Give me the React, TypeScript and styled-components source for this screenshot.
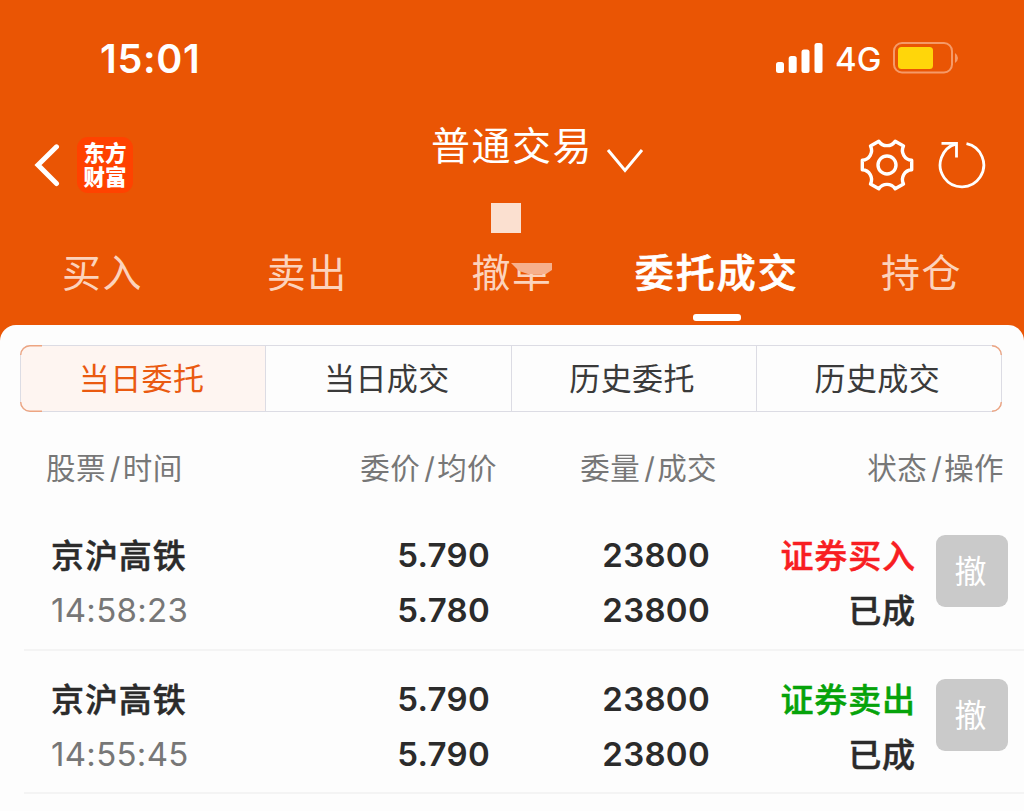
import React, { useState } from 'react';
import styled, { createGlobalStyle } from 'styled-components';

interface Order {
  id: number;
  name: string;
  time: string;
  price: string;
  avgPrice: string;
  amount: string;
  filled: string;
  side: 'buy' | 'sell';
  status: string;
}

const TABS = ['买入', '卖出', '撤单', '委托成交', '持仓'];
const SEGMENTS = ['当日委托', '当日成交', '历史委托', '历史成交'];
const COLUMNS = [
  ['股票', '时间'],
  ['委价', '均价'],
  ['委量', '成交'],
  ['状态', '操作'],
];

const ORDERS: Order[] = [
  {
    id: 1,
    name: '京沪高铁',
    time: '14:58:23',
    price: '5.790',
    avgPrice: '5.780',
    amount: '23800',
    filled: '23800',
    side: 'buy',
    status: '已成',
  },
  {
    id: 2,
    name: '京沪高铁',
    time: '14:55:45',
    price: '5.790',
    avgPrice: '5.790',
    amount: '23800',
    filled: '23800',
    side: 'sell',
    status: '已成',
  },
];

const GlobalStyle = createGlobalStyle`
  * {
    box-sizing: border-box;
  }

  body {
    margin: 0;
    background: #ea5504;
    font-family: Inter, 'Noto Sans CJK SC', sans-serif;
  }

  button {
    margin: 0;
    padding: 0;
    border: none;
    background: none;
    font-family: inherit;
    cursor: pointer;
  }
`;

// Styled Components
const Page = styled.div`
  display: flex;
  flex-direction: column;
  width: 1024px;
  height: 811px;
  overflow: hidden;
  background: #ea5504;
  color: #ffffff;
`;

const StatusBar = styled.div`
  display: flex;
  align-items: center;
  justify-content: space-between;
  height: 116px;
  padding: 0 65px 0 100px;
`;

const Clock = styled.span`
  margin-top: 2px;
  font-size: 39.5px;
  font-weight: 600;
  letter-spacing: 0.7px;
  line-height: 48px;
`;

const StatusIcons = styled.div`
  display: flex;
  align-items: center;
`;

const Network = styled.span`
  width: 46px;
  margin: 2px 12px 0 12px;
  font-size: 33px;
  font-weight: 500;
  line-height: 40px;
`;

const NavBar = styled.div`
  display: flex;
  align-items: center;
  height: 98px;
  padding: 0 37px 0 33px;
`;

const IconButton = styled.button`
  display: flex;
  color: #ffffff;
`;

const Logo = styled.div`
  display: flex;
  flex-direction: column;
  align-items: center;
  justify-content: center;
  width: 56px;
  height: 56px;
  margin-left: 16px;
  border-radius: 11px;
  background: #ff4200;
  font-size: 21.5px;
  font-weight: 900;
  line-height: 24px;
`;

const TitleButton = styled.button`
  position: relative;
  display: flex;
  align-items: center;
  align-self: flex-start;
  height: 60px;
  margin-left: 298px;
  color: #ffffff;
  font-size: 39px;
  letter-spacing: 1.5px;
  line-height: 60px;
`;

const TitleArrow = styled.svg`
  margin: 29px 0 0 13px;
`;

const TitleMark = styled.span`
  position: absolute;
  top: 87px;
  left: 60px;
  width: 30px;
  height: 30px;
  background: #fbe0d0;
`;

const NavActions = styled.div`
  display: flex;
  align-items: center;
  gap: 23px;
  margin-left: auto;
`;

const TabBar = styled.div`
  display: flex;
  height: 111px;
`;

const Tab = styled.button<{ $active: boolean }>`
  position: relative;
  flex: 1;
  height: 100%;
  padding-top: 6px;
  color: ${({ $active }) => ($active ? '#ffffff' : '#fcd3bc')};
  font-size: 39px;
  font-weight: ${({ $active }) => ($active ? 500 : 400)};
  letter-spacing: ${({ $active }) => ($active ? '2px' : '1.5px')};
  line-height: 105px;
  white-space: nowrap;
  -webkit-text-stroke: ${({ $active }) => ($active ? '0.7px' : '0')};
`;

const Indicator = styled.span`
  position: absolute;
  bottom: 4px;
  left: calc(50% - 24px);
  width: 48px;
  height: 7px;
  border-radius: 3px;
  background: #ffffff;
`;

const TabPatch = styled.svg`
  position: absolute;
  top: 34px;
  left: 100px;
`;

const Panel = styled.div`
  flex: 1;
  border-radius: 16px 16px 0 0;
  background: #fdfdfd;
  color: #2b2b2b;
`;

const SegmentBar = styled.div`
  position: relative;
  display: flex;
  width: 982px;
  height: 67px;
  margin: 20px 0 0 20px;
  border: 1.5px solid #dcdce4;
  border-radius: 10px;
  overflow: hidden;
`;

const Segment = styled.button<{ $active: boolean }>`
  flex: 1;
  padding-right: 3px;
  color: ${({ $active }) => ($active ? '#ea5a10' : '#3a3a3a')};
  background: ${({ $active }) => ($active ? '#fef5f1' : 'transparent')};
  font-size: 31px;
  letter-spacing: 0.4px;
  line-height: 64px;

  & + & {
    border-left: 1.5px solid #dcdce4;
  }
`;

const SegmentWrap = styled.div`
  position: relative;
  padding-top: 0.1px;
`;

const Corners = styled.svg`
  position: absolute;
  top: 20px;
  left: 20px;
  pointer-events: none;
`;

const HeaderRow = styled.div`
  display: grid;
  grid-template-columns: 231px 220px 220px 1fr;
  height: 95px;
  padding: 0 20px 0 46px;
  color: #777777;
  font-size: 29.5px;
  letter-spacing: 0.4px;
  line-height: 112px;
`;

const HeaderCell = styled.span<{ $right?: boolean }>`
  text-align: ${({ $right }) => ($right ? 'right' : 'left')};
`;

const Slash = styled.span`
  margin: 0 2px 0 4px;
`;

const OrderRow = styled.div`
  display: grid;
  grid-template-columns: 200px 239px 220px 206px 72px;
  height: 143.5px;
  margin-left: 24px;
  padding: 21px 0 0 27px;
  border-bottom: 2px solid #f4f4f4;
`;

const Cell = styled.div<{ $right?: boolean }>`
  display: flex;
  flex-direction: column;
  align-items: ${({ $right }) => ($right ? 'flex-end' : 'flex-start')};
`;

const Strong = styled.span<{ $color?: string }>`
  height: 55px;
  color: ${({ $color }) => $color || '#2b2b2b'};
  font-size: 33px;
  font-weight: 500;
  letter-spacing: 0.9px;
  line-height: 56px;
  -webkit-text-stroke: 0.5px;
`;

const Figure = styled.span`
  height: 55px;
  font-size: 33px;
  font-weight: 600;
  letter-spacing: 0.3px;
  line-height: 54px;
`;

const Time = styled.span`
  height: 55px;
  color: #777777;
  font-size: 33px;
  letter-spacing: 0.3px;
  line-height: 54px;
`;

const CancelButton = styled.button`
  width: 72px;
  height: 72px;
  margin: 7px 0 0 20px;
  padding: 1px 3px 0 0;
  border-radius: 9px;
  background: #cacaca;
  color: #ffffff;
  font-size: 32px;
  line-height: 71px;
`;

const SignalIcon = () => (
  <svg width="47" height="30" viewBox="0 0 47 30" fill="currentColor">
    <rect x="0" y="19" width="8" height="11" rx="2.5" />
    <rect x="12.7" y="13" width="8" height="17" rx="2.5" />
    <rect x="25.5" y="6.5" width="8" height="23.5" rx="2.5" />
    <rect x="38.5" y="0" width="8" height="30" rx="2.5" />
  </svg>
);

const BatteryIcon = () => (
  <svg width="66" height="32" viewBox="0 0 66 32" fill="none">
    <rect x="1" y="1" width="58" height="29.5" rx="8" stroke="#f59a68" strokeWidth="2" />
    <rect x="5" y="5" width="35" height="22" rx="3.5" fill="#ffd60a" />
    <path d="M62 11 Q65 13 65 16 T62 21 Z" fill="#f59a68" />
  </svg>
);

const GearIcon = () => (
  <svg width="54" height="54" viewBox="-27 -27 54 54" fill="none" stroke="currentColor" strokeWidth="3.4" strokeLinejoin="round">
    <path d="M24.7 -4.8 L24.7 4.8 A9.8 9.8 0 0 0 16.5 19 L8.2 23.8 A9.8 9.8 0 0 0 -8.2 23.8 L-16.5 19 A9.8 9.8 0 0 0 -24.7 4.8 L-24.7 -4.8 A9.8 9.8 0 0 0 -16.5 -19 L-8.2 -23.8 A9.8 9.8 0 0 0 8.2 -23.8 L16.5 -19 A9.8 9.8 0 0 0 24.7 -4.8 Z" />
    <circle r="9" />
  </svg>
);

const RefreshIcon = () => (
  <svg width="50" height="50" viewBox="-25 -25 50 50" fill="none" stroke="currentColor" strokeWidth="2.8">
    <path d="M4.5 -21.3 A21.8 21.8 0 1 1 -5.5 -21.1" />
    <path d="M-20.5 -21.6 H-5.5 V-7.5" />
  </svg>
);

const App: React.FC = () => {
  const [activeTab, setActiveTab] = useState('委托成交');
  const [activeSegment, setActiveSegment] = useState('当日委托');

  return (
    <Page>
      <GlobalStyle />
      <StatusBar>
        <Clock>15:01</Clock>
        <StatusIcons>
          <SignalIcon />
          <Network>4G</Network>
          <BatteryIcon />
        </StatusIcons>
      </StatusBar>

      <NavBar>
        <IconButton>
          <svg width="28" height="44" viewBox="0 0 28 44" fill="none" stroke="currentColor" strokeWidth="5">
            <path d="M23.5 3.8 L5 22 L23.5 40.5" strokeLinecap="round" />
          </svg>
        </IconButton>
        <Logo>
          <span>东方</span>
          <span>财富</span>
        </Logo>
        <TitleButton>
          普通交易
          <TitleArrow width="38" height="26" viewBox="0 0 38 26" fill="none" stroke="currentColor" strokeWidth="3">
            <path d="M2 2 L19 22.5 L36 2" />
          </TitleArrow>
          <TitleMark />
        </TitleButton>
        <NavActions>
          <IconButton>
            <GearIcon />
          </IconButton>
          <IconButton>
            <RefreshIcon />
          </IconButton>
        </NavActions>
      </NavBar>

      <TabBar>
        {TABS.map((tab) => (
          <Tab key={tab} $active={tab === activeTab} onClick={() => setActiveTab(tab)}>
            {tab}
            {tab === activeTab && <Indicator />}
            {tab === '撤单' && (
              <TabPatch width="44" height="28" viewBox="0 0 44 28">
                <rect x="4" y="0" width="40" height="16" fill="#ea5504" />
                <path d="M1 15 H42 V22 L36 26 H18 L9 23 Z" fill="#f6b08c" />
              </TabPatch>
            )}
          </Tab>
        ))}
      </TabBar>

      <Panel>
        <SegmentWrap>
          <SegmentBar>
            {SEGMENTS.map((segment) => (
              <Segment key={segment} $active={segment === activeSegment} onClick={() => setActiveSegment(segment)}>
                {segment}
              </Segment>
            ))}
          </SegmentBar>
          {/* Orange rounded corners of the segment control */}
          <Corners width="982" height="67" viewBox="0 0 982 67" fill="none" stroke="#eda582" strokeWidth="1.4">
            <path d="M22 0.7 H10 A9.3 9.3 0 0 0 0.7 10" />
            <path d="M0.7 57 A9.3 9.3 0 0 0 10 66.3 H22" />
            <path d="M972 0.7 A9.3 9.3 0 0 1 981.3 10" />
            <path d="M981.3 57 A9.3 9.3 0 0 1 972 66.3" />
          </Corners>
        </SegmentWrap>

        {/* Header Row */}
        <HeaderRow>
          {COLUMNS.map(([first, second], index) => (
            <HeaderCell key={first} $right={index > 0}>
              {first}
              <Slash>/</Slash>
              {second}
            </HeaderCell>
          ))}
        </HeaderRow>

        {/* Order List */}
        {ORDERS.map((order) => (
          <OrderRow key={order.id}>
            <Cell>
              <Strong>{order.name}</Strong>
              <Time>{order.time}</Time>
            </Cell>
            <Cell $right>
              <Figure>{order.price}</Figure>
              <Figure>{order.avgPrice}</Figure>
            </Cell>
            <Cell $right>
              <Figure>{order.amount}</Figure>
              <Figure>{order.filled}</Figure>
            </Cell>
            <Cell $right>
              <Strong $color={order.side === 'buy' ? '#f81e22' : '#06a30a'}>
                {order.side === 'buy' ? '证券买入' : '证券卖出'}
              </Strong>
              <Strong>{order.status}</Strong>
            </Cell>
            <CancelButton>撤</CancelButton>
          </OrderRow>
        ))}
      </Panel>
    </Page>
  );
};

export default App;
